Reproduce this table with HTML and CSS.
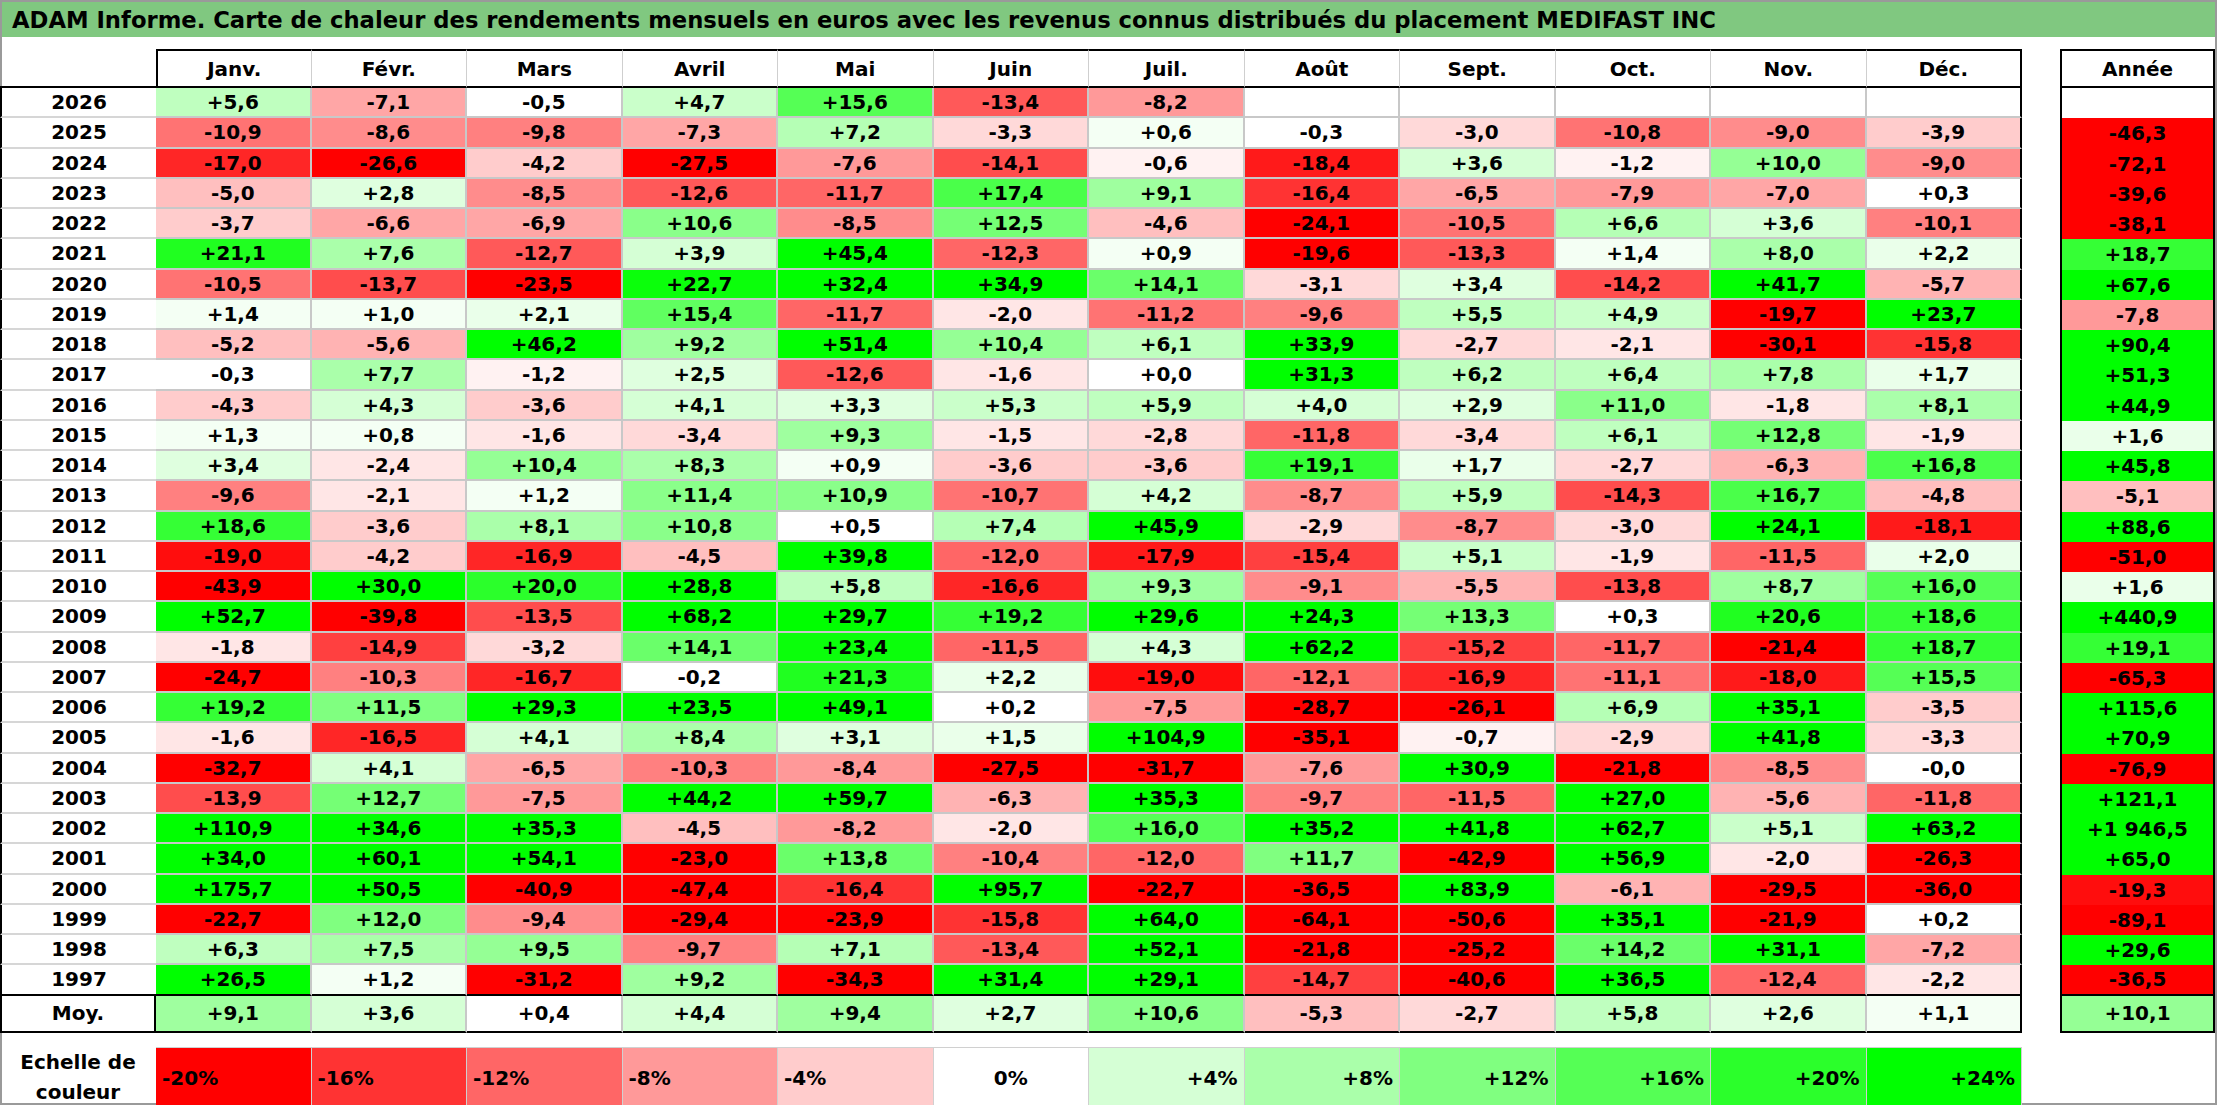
FILE: index.html
```html
<!DOCTYPE html>
<html lang="fr">
<head>
<meta charset="utf-8">
<title>ADAM Informe - MEDIFAST INC</title>
<link rel="stylesheet" href="styles.css">
</head>
<body>
<div class="frame">
  <div class="title">ADAM Informe. Carte de chaleur des rendements mensuels en euros avec les revenus connus distribués du placement MEDIFAST INC</div>
  <div class="sheet">
    <div class="row head">
      <div class="corner"></div>
      <div class="hc first">Janv.</div><div class="hc">Févr.</div><div class="hc">Mars</div><div class="hc">Avril</div><div class="hc">Mai</div><div class="hc">Juin</div><div class="hc">Juil.</div><div class="hc">Août</div><div class="hc">Sept.</div><div class="hc">Oct.</div><div class="hc">Nov.</div><div class="hc dec">Déc.</div>
      <div class="gap"></div>
      <div class="hc annee">Année</div>
    </div>
    <div class="row"><div class="yr">2026</div><div class="c p6">+5,6</div><div class="c n7">-7,1</div><div class="c z">-0,5</div><div class="c p5">+4,7</div><div class="c p16">+15,6</div><div class="c n13">-13,4</div><div class="c n8">-8,2</div><div class="c z"></div><div class="c z"></div><div class="c z"></div><div class="c z"></div><div class="c z"></div><div class="gap"></div><div class="a z"></div></div>
    <div class="row"><div class="yr">2025</div><div class="c n11">-10,9</div><div class="c n9">-8,6</div><div class="c n10">-9,8</div><div class="c n7">-7,3</div><div class="c p7">+7,2</div><div class="c n3">-3,3</div><div class="c p1">+0,6</div><div class="c z">-0,3</div><div class="c n3">-3,0</div><div class="c n11">-10,8</div><div class="c n9">-9,0</div><div class="c n4">-3,9</div><div class="gap"></div><div class="a n20">-46,3</div></div>
    <div class="row"><div class="yr">2024</div><div class="c n17">-17,0</div><div class="c n20">-26,6</div><div class="c n4">-4,2</div><div class="c n20">-27,5</div><div class="c n8">-7,6</div><div class="c n14">-14,1</div><div class="c n1">-0,6</div><div class="c n18">-18,4</div><div class="c p4">+3,6</div><div class="c n1">-1,2</div><div class="c p10">+10,0</div><div class="c n9">-9,0</div><div class="gap"></div><div class="a n20">-72,1</div></div>
    <div class="row"><div class="yr">2023</div><div class="c n5">-5,0</div><div class="c p3">+2,8</div><div class="c n9">-8,5</div><div class="c n13">-12,6</div><div class="c n12">-11,7</div><div class="c p17">+17,4</div><div class="c p9">+9,1</div><div class="c n16">-16,4</div><div class="c n7">-6,5</div><div class="c n8">-7,9</div><div class="c n7">-7,0</div><div class="c z">+0,3</div><div class="gap"></div><div class="a n20">-39,6</div></div>
    <div class="row"><div class="yr">2022</div><div class="c n4">-3,7</div><div class="c n7">-6,6</div><div class="c n7">-6,9</div><div class="c p11">+10,6</div><div class="c n9">-8,5</div><div class="c p13">+12,5</div><div class="c n5">-4,6</div><div class="c n20">-24,1</div><div class="c n11">-10,5</div><div class="c p7">+6,6</div><div class="c p4">+3,6</div><div class="c n10">-10,1</div><div class="gap"></div><div class="a n20">-38,1</div></div>
    <div class="row"><div class="yr">2021</div><div class="c p21">+21,1</div><div class="c p8">+7,6</div><div class="c n13">-12,7</div><div class="c p4">+3,9</div><div class="c p24">+45,4</div><div class="c n12">-12,3</div><div class="c p1">+0,9</div><div class="c n20">-19,6</div><div class="c n13">-13,3</div><div class="c p1">+1,4</div><div class="c p8">+8,0</div><div class="c p2">+2,2</div><div class="gap"></div><div class="a p19">+18,7</div></div>
    <div class="row"><div class="yr">2020</div><div class="c n11">-10,5</div><div class="c n14">-13,7</div><div class="c n20">-23,5</div><div class="c p23">+22,7</div><div class="c p24">+32,4</div><div class="c p24">+34,9</div><div class="c p14">+14,1</div><div class="c n3">-3,1</div><div class="c p3">+3,4</div><div class="c n14">-14,2</div><div class="c p24">+41,7</div><div class="c n6">-5,7</div><div class="gap"></div><div class="a p24">+67,6</div></div>
    <div class="row"><div class="yr">2019</div><div class="c p1">+1,4</div><div class="c p1">+1,0</div><div class="c p2">+2,1</div><div class="c p15">+15,4</div><div class="c n12">-11,7</div><div class="c n2">-2,0</div><div class="c n11">-11,2</div><div class="c n10">-9,6</div><div class="c p6">+5,5</div><div class="c p5">+4,9</div><div class="c n20">-19,7</div><div class="c p24">+23,7</div><div class="gap"></div><div class="a n8">-7,8</div></div>
    <div class="row"><div class="yr">2018</div><div class="c n5">-5,2</div><div class="c n6">-5,6</div><div class="c p24">+46,2</div><div class="c p9">+9,2</div><div class="c p24">+51,4</div><div class="c p10">+10,4</div><div class="c p6">+6,1</div><div class="c p24">+33,9</div><div class="c n3">-2,7</div><div class="c n2">-2,1</div><div class="c n20">-30,1</div><div class="c n16">-15,8</div><div class="gap"></div><div class="a p24">+90,4</div></div>
    <div class="row"><div class="yr">2017</div><div class="c z">-0,3</div><div class="c p8">+7,7</div><div class="c n1">-1,2</div><div class="c p3">+2,5</div><div class="c n13">-12,6</div><div class="c n2">-1,6</div><div class="c z">+0,0</div><div class="c p24">+31,3</div><div class="c p6">+6,2</div><div class="c p6">+6,4</div><div class="c p8">+7,8</div><div class="c p2">+1,7</div><div class="gap"></div><div class="a p24">+51,3</div></div>
    <div class="row"><div class="yr">2016</div><div class="c n4">-4,3</div><div class="c p4">+4,3</div><div class="c n4">-3,6</div><div class="c p4">+4,1</div><div class="c p3">+3,3</div><div class="c p5">+5,3</div><div class="c p6">+5,9</div><div class="c p4">+4,0</div><div class="c p3">+2,9</div><div class="c p11">+11,0</div><div class="c n2">-1,8</div><div class="c p8">+8,1</div><div class="gap"></div><div class="a p24">+44,9</div></div>
    <div class="row"><div class="yr">2015</div><div class="c p1">+1,3</div><div class="c p1">+0,8</div><div class="c n2">-1,6</div><div class="c n3">-3,4</div><div class="c p9">+9,3</div><div class="c n2">-1,5</div><div class="c n3">-2,8</div><div class="c n12">-11,8</div><div class="c n3">-3,4</div><div class="c p6">+6,1</div><div class="c p13">+12,8</div><div class="c n2">-1,9</div><div class="gap"></div><div class="a p2">+1,6</div></div>
    <div class="row"><div class="yr">2014</div><div class="c p3">+3,4</div><div class="c n2">-2,4</div><div class="c p10">+10,4</div><div class="c p8">+8,3</div><div class="c p1">+0,9</div><div class="c n4">-3,6</div><div class="c n4">-3,6</div><div class="c p19">+19,1</div><div class="c p2">+1,7</div><div class="c n3">-2,7</div><div class="c n6">-6,3</div><div class="c p17">+16,8</div><div class="gap"></div><div class="a p24">+45,8</div></div>
    <div class="row"><div class="yr">2013</div><div class="c n10">-9,6</div><div class="c n2">-2,1</div><div class="c p1">+1,2</div><div class="c p11">+11,4</div><div class="c p11">+10,9</div><div class="c n11">-10,7</div><div class="c p4">+4,2</div><div class="c n9">-8,7</div><div class="c p6">+5,9</div><div class="c n14">-14,3</div><div class="c p17">+16,7</div><div class="c n5">-4,8</div><div class="gap"></div><div class="a n5">-5,1</div></div>
    <div class="row"><div class="yr">2012</div><div class="c p19">+18,6</div><div class="c n4">-3,6</div><div class="c p8">+8,1</div><div class="c p11">+10,8</div><div class="c z">+0,5</div><div class="c p7">+7,4</div><div class="c p24">+45,9</div><div class="c n3">-2,9</div><div class="c n9">-8,7</div><div class="c n3">-3,0</div><div class="c p24">+24,1</div><div class="c n18">-18,1</div><div class="gap"></div><div class="a p24">+88,6</div></div>
    <div class="row"><div class="yr">2011</div><div class="c n19">-19,0</div><div class="c n4">-4,2</div><div class="c n17">-16,9</div><div class="c n5">-4,5</div><div class="c p24">+39,8</div><div class="c n12">-12,0</div><div class="c n18">-17,9</div><div class="c n15">-15,4</div><div class="c p5">+5,1</div><div class="c n2">-1,9</div><div class="c n12">-11,5</div><div class="c p2">+2,0</div><div class="gap"></div><div class="a n20">-51,0</div></div>
    <div class="row"><div class="yr">2010</div><div class="c n20">-43,9</div><div class="c p24">+30,0</div><div class="c p20">+20,0</div><div class="c p24">+28,8</div><div class="c p6">+5,8</div><div class="c n17">-16,6</div><div class="c p9">+9,3</div><div class="c n9">-9,1</div><div class="c n6">-5,5</div><div class="c n14">-13,8</div><div class="c p9">+8,7</div><div class="c p16">+16,0</div><div class="gap"></div><div class="a p2">+1,6</div></div>
    <div class="row"><div class="yr">2009</div><div class="c p24">+52,7</div><div class="c n20">-39,8</div><div class="c n14">-13,5</div><div class="c p24">+68,2</div><div class="c p24">+29,7</div><div class="c p19">+19,2</div><div class="c p24">+29,6</div><div class="c p24">+24,3</div><div class="c p13">+13,3</div><div class="c z">+0,3</div><div class="c p21">+20,6</div><div class="c p19">+18,6</div><div class="gap"></div><div class="a p24">+440,9</div></div>
    <div class="row"><div class="yr">2008</div><div class="c n2">-1,8</div><div class="c n15">-14,9</div><div class="c n3">-3,2</div><div class="c p14">+14,1</div><div class="c p23">+23,4</div><div class="c n12">-11,5</div><div class="c p4">+4,3</div><div class="c p24">+62,2</div><div class="c n15">-15,2</div><div class="c n12">-11,7</div><div class="c n20">-21,4</div><div class="c p19">+18,7</div><div class="gap"></div><div class="a p19">+19,1</div></div>
    <div class="row"><div class="yr">2007</div><div class="c n20">-24,7</div><div class="c n10">-10,3</div><div class="c n17">-16,7</div><div class="c z">-0,2</div><div class="c p21">+21,3</div><div class="c p2">+2,2</div><div class="c n19">-19,0</div><div class="c n12">-12,1</div><div class="c n17">-16,9</div><div class="c n11">-11,1</div><div class="c n18">-18,0</div><div class="c p16">+15,5</div><div class="gap"></div><div class="a n20">-65,3</div></div>
    <div class="row"><div class="yr">2006</div><div class="c p19">+19,2</div><div class="c p12">+11,5</div><div class="c p24">+29,3</div><div class="c p24">+23,5</div><div class="c p24">+49,1</div><div class="c z">+0,2</div><div class="c n8">-7,5</div><div class="c n20">-28,7</div><div class="c n20">-26,1</div><div class="c p7">+6,9</div><div class="c p24">+35,1</div><div class="c n4">-3,5</div><div class="gap"></div><div class="a p24">+115,6</div></div>
    <div class="row"><div class="yr">2005</div><div class="c n2">-1,6</div><div class="c n17">-16,5</div><div class="c p4">+4,1</div><div class="c p8">+8,4</div><div class="c p3">+3,1</div><div class="c p2">+1,5</div><div class="c p24">+104,9</div><div class="c n20">-35,1</div><div class="c n1">-0,7</div><div class="c n3">-2,9</div><div class="c p24">+41,8</div><div class="c n3">-3,3</div><div class="gap"></div><div class="a p24">+70,9</div></div>
    <div class="row"><div class="yr">2004</div><div class="c n20">-32,7</div><div class="c p4">+4,1</div><div class="c n7">-6,5</div><div class="c n10">-10,3</div><div class="c n8">-8,4</div><div class="c n20">-27,5</div><div class="c n20">-31,7</div><div class="c n8">-7,6</div><div class="c p24">+30,9</div><div class="c n20">-21,8</div><div class="c n9">-8,5</div><div class="c z">-0,0</div><div class="gap"></div><div class="a n20">-76,9</div></div>
    <div class="row"><div class="yr">2003</div><div class="c n14">-13,9</div><div class="c p13">+12,7</div><div class="c n8">-7,5</div><div class="c p24">+44,2</div><div class="c p24">+59,7</div><div class="c n6">-6,3</div><div class="c p24">+35,3</div><div class="c n10">-9,7</div><div class="c n12">-11,5</div><div class="c p24">+27,0</div><div class="c n6">-5,6</div><div class="c n12">-11,8</div><div class="gap"></div><div class="a p24">+121,1</div></div>
    <div class="row"><div class="yr">2002</div><div class="c p24">+110,9</div><div class="c p24">+34,6</div><div class="c p24">+35,3</div><div class="c n5">-4,5</div><div class="c n8">-8,2</div><div class="c n2">-2,0</div><div class="c p16">+16,0</div><div class="c p24">+35,2</div><div class="c p24">+41,8</div><div class="c p24">+62,7</div><div class="c p5">+5,1</div><div class="c p24">+63,2</div><div class="gap"></div><div class="a p24">+1 946,5</div></div>
    <div class="row"><div class="yr">2001</div><div class="c p24">+34,0</div><div class="c p24">+60,1</div><div class="c p24">+54,1</div><div class="c n20">-23,0</div><div class="c p14">+13,8</div><div class="c n10">-10,4</div><div class="c n12">-12,0</div><div class="c p12">+11,7</div><div class="c n20">-42,9</div><div class="c p24">+56,9</div><div class="c n2">-2,0</div><div class="c n20">-26,3</div><div class="gap"></div><div class="a p24">+65,0</div></div>
    <div class="row"><div class="yr">2000</div><div class="c p24">+175,7</div><div class="c p24">+50,5</div><div class="c n20">-40,9</div><div class="c n20">-47,4</div><div class="c n16">-16,4</div><div class="c p24">+95,7</div><div class="c n20">-22,7</div><div class="c n20">-36,5</div><div class="c p24">+83,9</div><div class="c n6">-6,1</div><div class="c n20">-29,5</div><div class="c n20">-36,0</div><div class="gap"></div><div class="a n19">-19,3</div></div>
    <div class="row"><div class="yr">1999</div><div class="c n20">-22,7</div><div class="c p12">+12,0</div><div class="c n9">-9,4</div><div class="c n20">-29,4</div><div class="c n20">-23,9</div><div class="c n16">-15,8</div><div class="c p24">+64,0</div><div class="c n20">-64,1</div><div class="c n20">-50,6</div><div class="c p24">+35,1</div><div class="c n20">-21,9</div><div class="c z">+0,2</div><div class="gap"></div><div class="a n20">-89,1</div></div>
    <div class="row"><div class="yr">1998</div><div class="c p6">+6,3</div><div class="c p8">+7,5</div><div class="c p10">+9,5</div><div class="c n10">-9,7</div><div class="c p7">+7,1</div><div class="c n13">-13,4</div><div class="c p24">+52,1</div><div class="c n20">-21,8</div><div class="c n20">-25,2</div><div class="c p14">+14,2</div><div class="c p24">+31,1</div><div class="c n7">-7,2</div><div class="gap"></div><div class="a p24">+29,6</div></div>
    <div class="row end"><div class="yr">1997</div><div class="c p24">+26,5</div><div class="c p1">+1,2</div><div class="c n20">-31,2</div><div class="c p9">+9,2</div><div class="c n20">-34,3</div><div class="c p24">+31,4</div><div class="c p24">+29,1</div><div class="c n15">-14,7</div><div class="c n20">-40,6</div><div class="c p24">+36,5</div><div class="c n12">-12,4</div><div class="c n2">-2,2</div><div class="gap"></div><div class="a n20">-36,5</div></div>
    <div class="row moy"><div class="yr">Moy.</div><div class="c p9">+9,1</div><div class="c p4">+3,6</div><div class="c z">+0,4</div><div class="c p4">+4,4</div><div class="c p9">+9,4</div><div class="c p3">+2,7</div><div class="c p11">+10,6</div><div class="c n5">-5,3</div><div class="c n3">-2,7</div><div class="c p6">+5,8</div><div class="c p3">+2,6</div><div class="c p1">+1,1</div><div class="gap"></div><div class="a p10">+10,1</div></div>
    <div class="row legend">
      <div class="lab"><span>Echelle de</span><span>couleur</span></div>
      <div class="lg l n20">-20%</div><div class="lg l n16">-16%</div><div class="lg l n12">-12%</div><div class="lg l n8">-8%</div><div class="lg l n4">-4%</div><div class="lg z">0%</div><div class="lg r p4">+4%</div><div class="lg r p8">+8%</div><div class="lg r p12">+12%</div><div class="lg r p16">+16%</div><div class="lg r p20">+20%</div><div class="lg r p24">+24%</div>
      <div class="gap"></div><div class="gap"></div>
    </div>
  </div>
</div>
</body>
</html>
```
FILE: styles.css
```css
* { box-sizing: border-box; }
html, body { margin: 0; padding: 0; background: #fff; }
body {
  font-family: "DejaVu Sans", "Liberation Sans", sans-serif;
  font-weight: 700;
  font-size: 20px;
  color: #000;
}
.frame {
  width: 2217px;
  height: 1105px;
  border: 2px solid #9a9a9a;
}
.title {
  height: 35px;
  line-height: 36px;
  font-size: 22.7px;
  background: #80c880;
  padding-left: 10px;
  white-space: nowrap;
}
.sheet {
  margin: 12px 0 0 -2px;
  width: 2215px;
}
.row {
  display: grid;
  grid-template-columns: 156px repeat(12, 155.5px) 38px 155px;
  height: 30.25px;
}
.row > div {
  display: flex;
  align-items: center;
  justify-content: center;
  white-space: nowrap;
}
.head { height: 39px; }
.corner { border-bottom: 2px solid #000; }
.hc {
  border-top: 2px solid #000;
  border-bottom: 2px solid #000;
  border-right: 1px solid #cfcfcf;
  background: #fff;
}
.hc.first { border-left: 2px solid #000; }
.hc.dec { border-right: 2px solid #000; }
.hc.annee { border: 2px solid #000; }

.yr {
  border-left: 2px solid #000;
  border-bottom: 2px solid #d6d6d6;
  background: #fff;
}
.c {
  border-right: 2px solid #c8c8c8;
  border-bottom: 2px solid #c8c8c8;
}
.c:nth-child(13) { border-right: 2px solid #000; }
.a {
  border-left: 2px solid #000;
  border-right: 2px solid #000;
}
.end .yr, .end .c { border-bottom-color: #000; }
.end .a { border-bottom: 2px solid #000; }
.moy { height: 37.5px; }
.moy .yr { border-right: 2px solid #000; border-bottom: 2px solid #000; }
.moy .c { border-bottom: 2px solid #000; }
.moy .a { border-bottom: 2px solid #000; }

.legend { height: 56px; margin-top: 14px; }
.row > .lab {
  flex-direction: column;
  line-height: 30px;
  text-align: center;
}
.lg {
  border-top: 1px solid #d0d0d0;
  border-right: 1px solid #d0d0d0;
  padding: 0 6px;
}
.row > .lg.l { justify-content: flex-start; }
.row > .lg.r { justify-content: flex-end; }

/* colour scale: red for negative (-20 = full), green for positive (+24 = full) */
.z { background: #fff; }
.n1 { background: #fff2f2; }
.n2 { background: #ffe6e6; }
.n3 { background: #ffd9d9; }
.n4 { background: #ffcccc; }
.n5 { background: #ffbfbf; }
.n6 { background: #ffb3b3; }
.n7 { background: #ffa6a6; }
.n8 { background: #ff9999; }
.n9 { background: #ff8c8c; }
.n10 { background: #ff8080; }
.n11 { background: #ff7373; }
.n12 { background: #ff6666; }
.n13 { background: #ff5959; }
.n14 { background: #ff4d4d; }
.n15 { background: #ff4040; }
.n16 { background: #ff3333; }
.n17 { background: #ff2626; }
.n18 { background: #ff1a1a; }
.n19 { background: #ff0d0d; }
.n20 { background: #ff0000; }
.p1 { background: #f4fff4; }
.p2 { background: #eaffea; }
.p3 { background: #dfffdf; }
.p4 { background: #d5ffd5; }
.p5 { background: #caffca; }
.p6 { background: #bfffbf; }
.p7 { background: #b5ffb5; }
.p8 { background: #aaffaa; }
.p9 { background: #9fff9f; }
.p10 { background: #95ff95; }
.p11 { background: #8aff8a; }
.p12 { background: #80ff80; }
.p13 { background: #75ff75; }
.p14 { background: #6aff6a; }
.p15 { background: #60ff60; }
.p16 { background: #55ff55; }
.p17 { background: #4aff4a; }
.p18 { background: #40ff40; }
.p19 { background: #35ff35; }
.p20 { background: #2bff2b; }
.p21 { background: #20ff20; }
.p22 { background: #15ff15; }
.p23 { background: #0bff0b; }
.p24 { background: #00ff00; }
```
